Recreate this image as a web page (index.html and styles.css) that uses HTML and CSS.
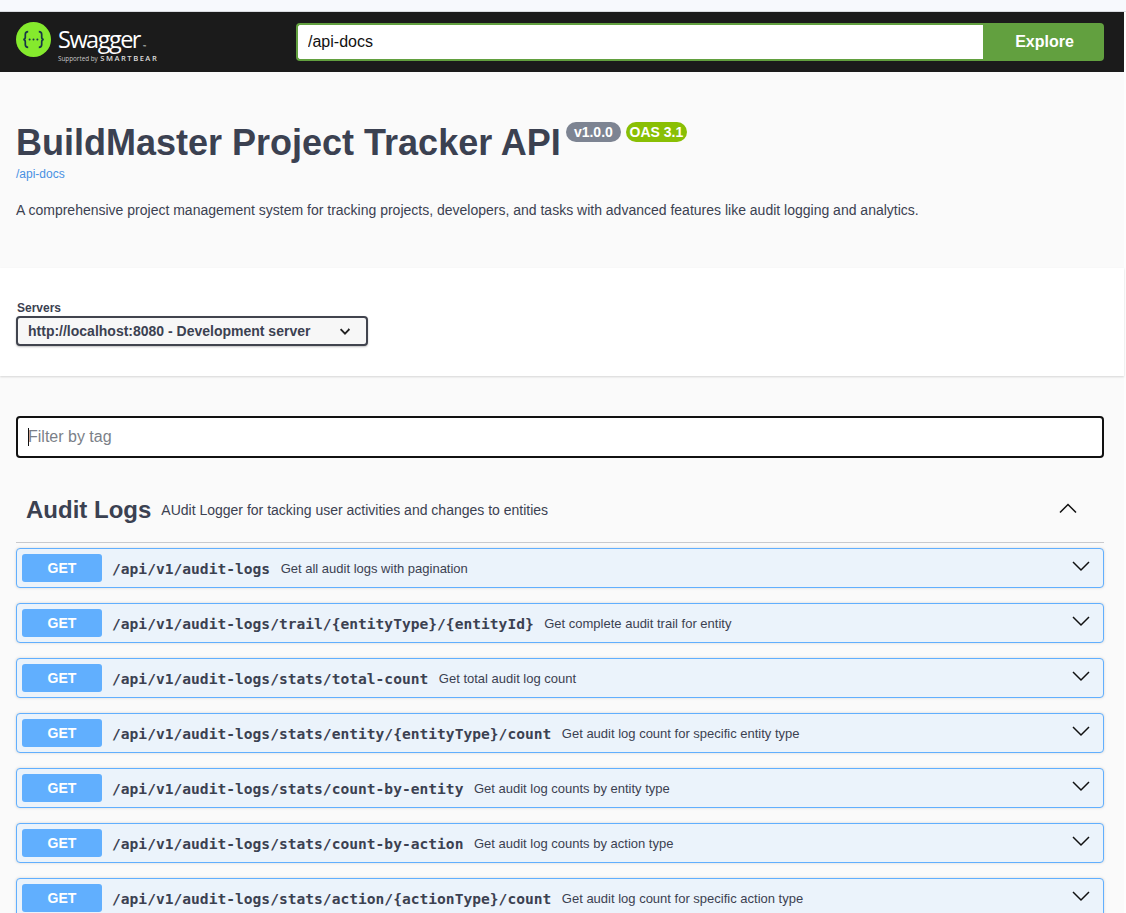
FILE: index.html
```html
<!DOCTYPE html>
<html lang="en">
<head>
<meta charset="utf-8">
<title>Swagger UI</title>
<link rel="stylesheet" href="styles.css">
</head>
<body>
<div class="top-strip"></div>
<div class="page">
<header class="topbar">
  <a class="brand">
    <svg class="brand-mark" viewBox="0 0 35 35" width="35" height="35" aria-hidden="true">
      <circle cx="17.5" cy="17.5" r="17.5" fill="#85ea2d"/>
      <path d="M12.2 9.6c-2.4 0-2.9 1.1-2.9 2.8v2.9c0 1.2-.6 2-2 2.2 1.4.2 2 1 2 2.2v2.9c0 1.7.5 2.8 2.9 2.8M22.8 9.6c2.4 0 2.9 1.1 2.9 2.8v2.9c0 1.2.6 2 2 2.2-1.4.2-2 1-2 2.2v2.9c0 1.7-.5 2.8-2.9 2.8" fill="none" stroke="#173647" stroke-width="1.7"/>
      <circle cx="13.6" cy="17.5" r="1" fill="#173647"/><circle cx="17.5" cy="17.5" r="1" fill="#173647"/><circle cx="21.4" cy="17.5" r="1" fill="#173647"/>
    </svg>
    <span class="brand-text">
      <span class="brand-name">Swagger<sup class="brand-tm">™</sup></span>
      <span class="brand-sub">Supported by <b>SMARTBEAR</b></span>
    </span>
  </a>
  <form class="explore">
    <input class="explore-input" type="text" value="/api-docs" aria-label="Spec URL">
    <button class="explore-btn" type="button">Explore</button>
  </form>
</header>

<section class="info">
  <h1 class="title">BuildMaster Project Tracker API<span class="badges"><span class="badge badge-version">v1.0.0</span><span class="badge badge-oas">OAS 3.1</span></span></h1>
  <a class="spec-link">/api-docs</a>
  <p class="desc">A comprehensive project management system for tracking projects, developers, and tasks with advanced features like audit logging and analytics.</p>
</section>

<section class="servers">
  <label class="servers-label" for="srv">Servers</label>
  <div class="select-wrap">
    <select id="srv" class="server-select"><option>http://localhost:8080 - Development server</option></select>
    <svg class="select-arrow" viewBox="0 0 20 20" width="20" height="20" aria-hidden="true"><path d="M13.25 9.25 14.4 8.1 10 12.6 5.6 8.1" fill="none" stroke="#222" stroke-width="1.9"/></svg>
  </div>
</section>

<main class="content">
  <div class="filter"><input class="filter-input" type="text" placeholder="Filter by tag" aria-label="Filter by tag"><span class="caret"></span></div>

  <div class="tag">
    <h3 class="tag-name">Audit Logs</h3>
    <span class="tag-desc">AUdit Logger for tacking user activities and changes to entities</span>
    <svg class="tag-arrow" viewBox="0 0 20 20" width="20" height="20" aria-hidden="true"><path d="M2 14.5 10 6.5 18 14.5" fill="none" stroke="#111" stroke-width="1.5"/></svg>
  </div>

  <div class="ops">
    <div class="op"><span class="method">GET</span><span class="path">/api/v1/audit-logs</span><span class="summary">Get all audit logs with pagination</span><svg class="op-arrow" viewBox="0 0 20 20" width="20" height="20" aria-hidden="true"><path d="M2 6 10 14 18 6" fill="none" stroke="#111" stroke-width="1.5"/></svg></div>
    <div class="op"><span class="method">GET</span><span class="path">/api/v1/audit-logs/trail/{entityType}/{entityId}</span><span class="summary">Get complete audit trail for entity</span><svg class="op-arrow" viewBox="0 0 20 20" width="20" height="20" aria-hidden="true"><path d="M2 6 10 14 18 6" fill="none" stroke="#111" stroke-width="1.5"/></svg></div>
    <div class="op"><span class="method">GET</span><span class="path">/api/v1/audit-logs/stats/total-count</span><span class="summary">Get total audit log count</span><svg class="op-arrow" viewBox="0 0 20 20" width="20" height="20" aria-hidden="true"><path d="M2 6 10 14 18 6" fill="none" stroke="#111" stroke-width="1.5"/></svg></div>
    <div class="op"><span class="method">GET</span><span class="path">/api/v1/audit-logs/stats/entity/{entityType}/count</span><span class="summary">Get audit log count for specific entity type</span><svg class="op-arrow" viewBox="0 0 20 20" width="20" height="20" aria-hidden="true"><path d="M2 6 10 14 18 6" fill="none" stroke="#111" stroke-width="1.5"/></svg></div>
    <div class="op"><span class="method">GET</span><span class="path">/api/v1/audit-logs/stats/count-by-entity</span><span class="summary">Get audit log counts by entity type</span><svg class="op-arrow" viewBox="0 0 20 20" width="20" height="20" aria-hidden="true"><path d="M2 6 10 14 18 6" fill="none" stroke="#111" stroke-width="1.5"/></svg></div>
    <div class="op"><span class="method">GET</span><span class="path">/api/v1/audit-logs/stats/count-by-action</span><span class="summary">Get audit log counts by action type</span><svg class="op-arrow" viewBox="0 0 20 20" width="20" height="20" aria-hidden="true"><path d="M2 6 10 14 18 6" fill="none" stroke="#111" stroke-width="1.5"/></svg></div>
    <div class="op"><span class="method">GET</span><span class="path">/api/v1/audit-logs/stats/action/{actionType}/count</span><span class="summary">Get audit log count for specific action type</span><svg class="op-arrow" viewBox="0 0 20 20" width="20" height="20" aria-hidden="true"><path d="M2 6 10 14 18 6" fill="none" stroke="#111" stroke-width="1.5"/></svg></div>
  </div>
</main>
</div>
</body>
</html>
```
FILE: styles.css
```css
* { box-sizing: border-box; }
html { overflow: hidden; height: 100%; }
body {
  margin: 0;
  background: #fdfdfd;
  font-family: "Liberation Sans", Arial, sans-serif;
  color: #3b4151;
  height: 913px;
  overflow: hidden;
}
.top-strip { height: 12px; background: #f7f9fd; border-bottom: 1px solid #d9dbe0; }
.page { margin-right: 2px; }
.topbar {
  height: 60px;
  background: #1b1b1b;
  display: flex;
  align-items: center;
  padding: 0 20px 0 16px;
}
.brand { display: flex; align-items: flex-start; gap: 7px; width: 280px; flex: none; height: 48px; color: #fff; }
.brand-mark { flex: none; margin-top: 4px; }
.brand-text { display: flex; flex-direction: column; margin-top: 9px; }
.brand-name { font-family: "Open Sans", sans-serif; font-size: 23.5px; font-weight: 400; line-height: 24px; letter-spacing: -1.5px; color: #fff; }
.brand-tm { font-size: 4px; line-height: 0; vertical-align: baseline; margin-left: 3px; }
.brand-sub { font-family: "Open Sans", sans-serif; font-size: 6.3px; line-height: 9px; color: #c8c8c8; white-space: nowrap; margin-top: 3px; }
.brand-sub b { font-size: 7.6px; letter-spacing: 1.5px; font-weight: 600; margin-left: 1px; color: #ddd; }
.explore { flex: 1; display: flex; height: 38px; }
.explore-input {
  flex: 1; min-width: 0; height: 38px;
  border: 2px solid #62a03f; border-right: 0; border-radius: 4px 0 0 4px;
  background: #fff; color: #111; padding: 0 10px;
  font: 16px "Liberation Sans", Arial, sans-serif; outline: none;
}
.explore-btn {
  width: 121px; height: 38px; border: 0; border-radius: 0 4px 4px 0;
  background: #62a03f; color: #fff; padding: 0 0 0 2px;
  font: bold 16px "Liberation Sans", Arial, sans-serif;
}
.info { background: #fafafa; height: 196px; padding: 51px 20px 0 16px; }
.title { margin: 0; font-size: 36px; line-height: 40px; font-weight: 700; color: #3b4151; display: flex; align-items: flex-start; white-space: nowrap; }
.badges { display: flex; gap: 5px; margin: -1px 0 0 5px; }
.badge {
  height: 20px; border-radius: 10px; color: #fff;
  font-size: 14px; line-height: 20px; font-weight: 700; text-align: center;
}
.badge-version { background: #7d8492; width: 55px; }
.badge-oas { background: #89bf04; width: 61px; }
.spec-link { display: block; font-size: 12px; line-height: 14px; margin-top: 4px; color: #4990e2; }
.desc { margin: 19px 0 0; font-size: 14px; line-height: 20px; color: #3b4151; }
.servers {
  background: #fff; height: 108px; padding: 33px 0 0 16px;
  box-shadow: 0 1px 2px rgba(0,0,0,.15);
  position: relative;
}
.servers-label { display: block; font-size: 12px; line-height: 14px; font-weight: 700; color: #3b4151; margin: 0 0 1px 1px; }
.select-wrap { position: relative; width: 352px; height: 30px; }
.server-select {
  appearance: none; display: block;
  width: 352px; height: 30px; padding: 0 10px;
  border: 2px solid #41444e; border-radius: 4px;
  background: #f7f7f7; color: #3b4151;
  box-shadow: 0 1px 2px 0 rgba(0,0,0,.25);
  font: bold 14px "Liberation Sans", Arial, sans-serif;
}
.select-arrow { position: absolute; right: 13px; top: 5px; pointer-events: none; }
.content { background: #fafafa; padding: 40px 20px 0 16px; height: 600px; }
.filter { position: relative; }
.filter-input {
  display: block; width: 100%; height: 42px; padding: 0 10px;
  border: 2px solid #111; border-radius: 4px; background: #fff;
  font: 16px "Liberation Sans", Arial, sans-serif; outline: none;
}
.filter-input::placeholder { color: #7b7f88; opacity: 1; }
.caret { position: absolute; left: 12px; top: 12px; width: 1px; height: 18px; background: #111; }
.tag {
  display: flex; align-items: center; height: 85px;
  border-bottom: 1px solid #c8c9cd; padding: 20px 0 0 10px;
}
.tag-name { margin: 0; font-size: 24px; line-height: 30px; font-weight: 700; color: #3b4151; }
.tag-desc { margin-left: 10px; font-size: 14px; color: #3b4151; }
.tag-arrow { margin-left: auto; margin-right: 26px; margin-top: -4px; }
.ops { display: flex; flex-direction: column; gap: 15px; padding-top: 5px; }
.op {
  display: flex; align-items: center; flex: none; height: 40px;
  padding: 0 0 0 5px;
  border: 1px solid #61affe; border-radius: 4px;
  background: #ebf3fb;
  box-shadow: 0 0 3px rgba(0,0,0,.15);
}
.method {
  flex: none; width: 80px; height: 28px; border-radius: 3px;
  background: #61affe; color: #fff;
  font-size: 14px; font-weight: 700; line-height: 28px; text-align: center;
}
.path {
  margin-left: 10px;
  font-family: "DejaVu Sans Mono", monospace; font-weight: 700; font-size: 14.6px;
  color: #3b4151; white-space: nowrap;
}
.summary { margin-left: 10.5px; font-size: 13px; color: #3b4151; white-space: nowrap; }
.op-arrow { margin-left: auto; margin-right: 12px; margin-top: -4px; }
```
